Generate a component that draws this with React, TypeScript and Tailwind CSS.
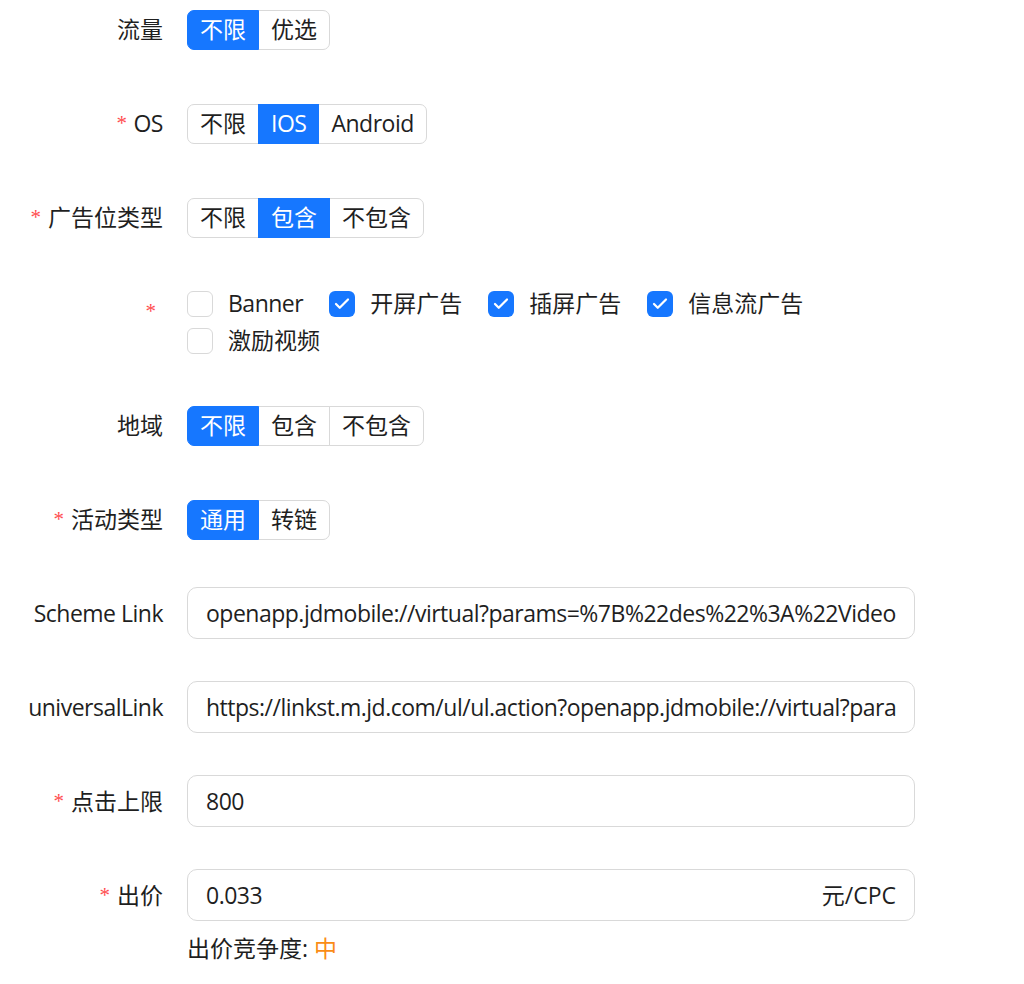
import { Check } from 'lucide-react';

const font = { fontFamily: '"Open Sans", "Noto Sans CJK SC", sans-serif' };

// latin-only strings run a touch narrower than Open Sans by default
const latin = 'tracking-[-0.5px]';

type Option = { label: string; active?: boolean; latin?: boolean };

function RadioGroup({ options }: { options: Option[] }) {
  return (
    <div className="flex h-10">
      {options.map((opt, i) => (
        <div
          key={opt.label}
          className={[
            'flex h-10 items-center px-3 text-[23px] leading-none border',
            opt.latin ? latin : '',
            i > 0 ? '-ml-px' : '',
            i === 0 ? 'rounded-l-[7px]' : '',
            i === options.length - 1 ? 'rounded-r-[7px]' : '',
            opt.active
              ? 'relative z-10 bg-[#1677ff] border-[#1677ff] text-white'
              : 'bg-white border-[#d9d9d9] text-[#1f1f1f]',
          ].join(' ')}
        >
          {opt.label}
        </div>
      ))}
    </div>
  );
}

function CheckItem({ label, checked, isLatin }: { label: string; checked?: boolean; isLatin?: boolean }) {
  return (
    <div className="mr-[13px] flex h-[37px] items-center">
      {checked ? (
        <span className="flex h-[26px] w-[26px] items-center justify-center rounded-[6px] bg-[#1677ff]">
          <Check className="h-[18px] w-[18px] text-white" strokeWidth={3} />
        </span>
      ) : (
        <span className="h-[26px] w-[26px] rounded-[6px] border border-[#d9d9d9] bg-white" />
      )}
      <span className={`pl-[15px] pr-[13px] text-[23px] text-[#1f1f1f] ${isLatin ? latin : ''}`}>{label}</span>
    </div>
  );
}

function Star() {
  return (
    <span
      className="mr-[7px] text-[21px] leading-none text-[#ff4d4f]"
      style={{ fontFamily: '"Liberation Serif", serif' }}
    >
      *
    </span>
  );
}

function Field({
  label,
  required,
  isLatin,
  tight,
  children,
}: {
  label?: string;
  required?: boolean;
  isLatin?: boolean;
  tight?: boolean;
  children: React.ReactNode;
}) {
  return (
    <div className={`flex items-start ${tight ? 'mb-[40px]' : 'mb-[41px]'}`}>
      <div
        className={`flex h-[53px] w-[163px] shrink-0 items-center justify-end text-[23px] text-[#1f1f1f] ${isLatin ? latin : ''}`}
      >
        {required && <Star />}
        {label}
      </div>
      <div className="ml-6 w-[728px]">{children}</div>
    </div>
  );
}

function TextBox({ value, suffix }: { value: string; suffix?: string }) {
  return (
    <div className="flex h-[52px] w-[728px] items-center rounded-[10px] border border-[#d9d9d9] bg-white pl-[18px] pr-[18px] text-[23px] text-[#1f1f1f]">
      <div className={`flex-1 overflow-hidden whitespace-nowrap ${latin}`}>{value}</div>
      {suffix && <span className="ml-2 shrink-0">{suffix}</span>}
    </div>
  );
}

export default function App() {
  return (
    <div className="min-h-screen bg-white pt-[3px]" style={font}>
      <Field label="流量">
        <div className="flex h-[53px] items-center">
          <RadioGroup options={[{ label: '不限', active: true }, { label: '优选' }]} />
        </div>
      </Field>

      <Field label="OS" required isLatin>
        <div className="flex h-[53px] items-center">
          <RadioGroup
            options={[
              { label: '不限' },
              { label: 'IOS', active: true, latin: true },
              { label: 'Android', latin: true },
            ]}
          />
        </div>
      </Field>

      <Field label="广告位类型" required>
        <div className="flex h-[53px] items-center">
          <RadioGroup options={[{ label: '不限' }, { label: '包含', active: true }, { label: '不包含' }]} />
        </div>
      </Field>

      <Field required tight>
        <div className="flex flex-wrap">
          <CheckItem label="Banner" isLatin />
          <CheckItem label="开屏广告" checked />
          <CheckItem label="插屏广告" checked />
          <CheckItem label="信息流广告" checked />
          <CheckItem label="激励视频" />
        </div>
      </Field>

      <Field label="地域">
        <div className="flex h-[53px] items-center">
          <RadioGroup options={[{ label: '不限', active: true }, { label: '包含' }, { label: '不包含' }]} />
        </div>
      </Field>

      <Field label="活动类型" required>
        <div className="flex h-[53px] items-center">
          <RadioGroup options={[{ label: '通用', active: true }, { label: '转链' }]} />
        </div>
      </Field>

      <Field label="Scheme Link" isLatin>
        <TextBox value="openapp.jdmobile://virtual?params=%7B%22des%22%3A%22VideoImmersion%22%2C%22category%22%3A%22jump%22%7D" />
      </Field>

      <Field label="universalLink" isLatin>
        <TextBox value="https://linkst.m.jd.com/ul/ul.action?openapp.jdmobile://virtual?params=%7B%22des%22%3A%22VideoImmersion%22%7D" />
      </Field>

      <Field label="点击上限" required>
        <TextBox value="800" />
      </Field>

      <div className="flex items-start">
        <div className="flex h-[53px] w-[163px] shrink-0 items-center justify-end text-[23px] text-[#1f1f1f]">
          <Star />
          出价
        </div>
        <div className="ml-6 w-[728px]">
          <TextBox value="0.033" suffix="元/CPC" />
          <div className="mt-[9px] h-[36px] text-[23px] leading-[36px] text-[#1f1f1f]">
            出价竞争度: <span className="text-[#fa8c16]">中</span>
          </div>
        </div>
      </div>
    </div>
  );
}
